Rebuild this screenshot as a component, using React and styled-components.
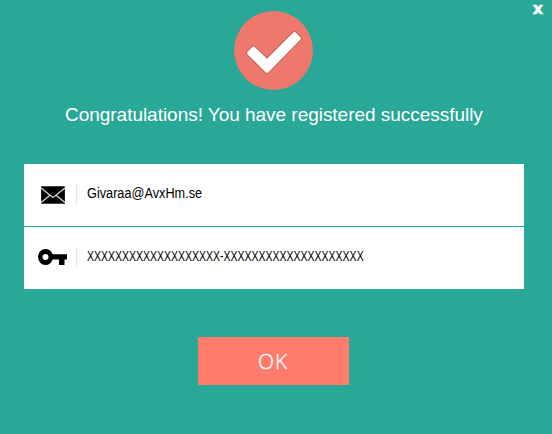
import React from "react";
import styled, { createGlobalStyle } from "styled-components";

const GlobalStyle = createGlobalStyle`
  * { box-sizing: border-box; }
  body { margin: 0; background: #29a797; }
`;

const Dialog = styled.main`
  width: 552px;
  height: 434px;
  background: #29a797;
  font-family: "Liberation Sans", Arial, sans-serif;
  display: flex;
  flex-direction: column;
  overflow: hidden;
`;

const TitleBar = styled.header`
  height: 11px;
  display: flex;
  justify-content: flex-end;
  padding-right: 9px;
`;

const CloseButton = styled.button`
  height: 17px;
  padding: 0;
  border: 0;
  background: none;
  color: #fff;
  font: 700 16px/17px "DejaVu Sans", sans-serif;
  -webkit-text-stroke: 0.5px #fff;
  cursor: pointer;
`;

const SuccessBadge = styled.svg`
  display: block;
  width: 80px;
  height: 80px;
  margin-left: 234px;
`;

const Title = styled.h1`
  margin: 12px 0 0 65px;
  color: #fff;
  font-size: 19px;
  font-weight: 400;
  line-height: 24px;
  letter-spacing: -0.03px;
  white-space: nowrap;
`;

const Fields = styled.section`
  width: 500px;
  margin: 37px 0 0 24px;
  display: grid;
  grid-template-rows: 62px 62px;
  gap: 1px;
`;

const Field = styled.div`
  display: flex;
  align-items: center;
  background: #fff;
`;

const IconCell = styled.div`
  width: 53px;
  height: ${(p) => p.$height}px;
  display: flex;
  align-items: center;
  padding-left: ${(p) => p.$inset}px;
  padding-bottom: ${(p) => p.$lift || 0}px;
  border-right: 1px solid #e6e6e6;
`;

const Value = styled.span`
  display: inline-block;
  margin: -4px 0 0 10px;
  color: #000;
  font-size: 14px;
  line-height: 16px;
  transform: scaleX(${(p) => p.$stretch});
  transform-origin: left;
  white-space: nowrap;
`;

const OkButton = styled.button`
  width: 151px;
  height: 48px;
  margin: 48px 0 0 198px;
  padding: 0 1px 0 0;
  border: 0;
  background: #ff7b6c;
  color: #fff;
  font: 300 21px/24px "Open Sans", sans-serif;
  letter-spacing: 0.8px;
  -webkit-text-stroke: 0.3px #fff;
  cursor: pointer;
`;

const CheckMark = () => (
  <SuccessBadge viewBox="0 0 80 80">
    <circle cx="39.5" cy="39.5" r="39.5" fill="#ed786b" />
    <path
      d="M13.8 39.6 18 35.4Q19.5 34 21 35.4L33 46.8 59 20.8Q60.5 19.5 62 20.8L66.2 25Q67.5 26.5 66.2 27.9L34.5 60.4Q33 61.9 31.5 60.4L13.8 42.8Q12.3 41.2 13.8 39.6Z"
      transform="translate(0 .9)"
      fill="#fff"
      stroke="#bd594f"
      strokeWidth="1.6"
      paintOrder="stroke"
    />
  </SuccessBadge>
);

const MailIcon = () => (
  <svg width="24" height="18" viewBox="0 0 24 18">
    <rect width="24" height="18" rx="0.6" fill="#444" />
    <rect x="0.5" y="1" width="23" height="16" fill="#000" />
    <path
      d="M0 2 12 11.5 24 2M0 16.5 9 9.2M24 16.5 15 9.2"
      fill="none"
      stroke="#ddd"
      strokeWidth="1.2"
    />
  </svg>
);

const KeyIcon = () => (
  <svg width="30" height="16" viewBox="0 0 30 16">
    <path
      fillRule="evenodd"
      d="M7.5 0C11 0 13.6 2 14.6 5.3H29V10.5H26.5V16H21V10.5H14.6C13.6 14 11 16 7.5 16A7.5 8 0 0 1 7.5 0ZM7.5 5A3 3 0 1 0 7.5 11A3 3 0 1 0 7.5 5Z"
    />
  </svg>
);

export default function App() {
  return (
    <>
      <GlobalStyle />
      <Dialog>
        <TitleBar>
          <CloseButton aria-label="Close">x</CloseButton>
        </TitleBar>
        <CheckMark />
        <Title>Congratulations! You have registered successfully</Title>
        <Fields>
          <Field>
            <IconCell $inset={17} $height={22}>
              <MailIcon />
            </IconCell>
            <Value $stretch={0.908}>Givaraa@AvxHm.se</Value>
          </Field>
          <Field>
            <IconCell $inset={14} $height={20} $lift={2}>
              <KeyIcon />
            </IconCell>
            <Value $stretch={0.75}>
              XXXXXXXXXXXXXXXXXXX-XXXXXXXXXXXXXXXXXXXX
            </Value>
          </Field>
        </Fields>
        <OkButton>OK</OkButton>
      </Dialog>
    </>
  );
}
